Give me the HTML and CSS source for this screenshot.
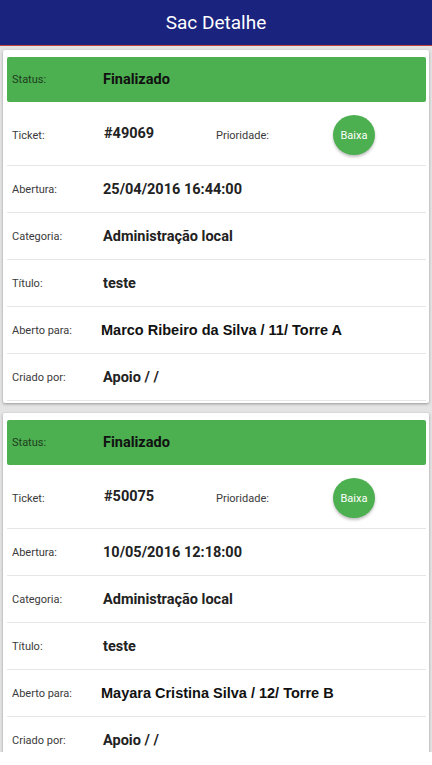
FILE: index.html
```html
<!DOCTYPE html>
<html lang="pt-BR">
<head>
<meta charset="UTF-8">
<meta name="viewport" content="width=device-width, initial-scale=1.0">
<title>Sac Detalhe</title>
<link rel="stylesheet" href="styles.css">
</head>
<body>
<div class="topbar">Sac Detalhe</div>

<div class="content">

<div class="card">
<div class="row status-row">
<span class="label">Status:</span>
<span class="value">Finalizado</span>
</div>
<div class="row ticket-row">
<span class="label">Ticket:</span>
<span class="value ticket">#49069</span>
<span class="label prio-label">Prioridade:</span>
<span class="badge">Baixa</span>
</div>
<div class="row">
<span class="label">Abertura:</span>
<span class="value">25/04/2016 16:44:00</span>
</div>
<div class="row">
<span class="label">Categoria:</span>
<span class="value">Administração local</span>
</div>
<div class="row">
<span class="label">Título:</span>
<span class="value">teste</span>
</div>
<div class="row">
<span class="label">Aberto para:</span>
<span class="value name">Marco Ribeiro da Silva / 11/ Torre A</span>
</div>
<div class="row">
<span class="label">Criado por:</span>
<span class="value">Apoio / /</span>
</div>
</div>

<div class="card">
<div class="row status-row">
<span class="label">Status:</span>
<span class="value">Finalizado</span>
</div>
<div class="row ticket-row">
<span class="label">Ticket:</span>
<span class="value ticket">#50075</span>
<span class="label prio-label">Prioridade:</span>
<span class="badge">Baixa</span>
</div>
<div class="row">
<span class="label">Abertura:</span>
<span class="value">10/05/2016 12:18:00</span>
</div>
<div class="row">
<span class="label">Categoria:</span>
<span class="value">Administração local</span>
</div>
<div class="row">
<span class="label">Título:</span>
<span class="value">teste</span>
</div>
<div class="row">
<span class="label">Aberto para:</span>
<span class="value name">Mayara Cristina Silva / 12/ Torre B</span>
</div>
<div class="row">
<span class="label">Criado por:</span>
<span class="value">Apoio / /</span>
</div>
</div>

</div>
</body>
</html>
```

FILE: styles.css
```css
body {
  margin: 0;
  padding: 0;
  background-color: #fff;
  font-family: Roboto, 'Liberation Sans', sans-serif;
  color: #222;
}

.topbar {
  height: 45px;
  background-color: #1a237e;
  border-bottom: 1px solid #c0463a;
  color: #fff;
  font-size: 19px;
  display: flex;
  align-items: center;
  justify-content: center;
}

.content {
  height: 702px;
  overflow: hidden;
  background-color: #e4e4e4;
  padding: 4px 3px 0 3px;
}

.card {
  background-color: #fff;
  box-shadow: 0 1px 3px rgba(0, 0, 0, 0.35);
  border-radius: 2px;
  padding: 7px 3px 2px 4px;
  margin-bottom: 10px;
}

.row {
  display: flex;
  align-items: center;
  height: 46px;
  border-bottom: 1px solid #e6e6e6;
}

.label {
  width: 91px;
  padding-left: 5px;
  font-size: 11px;
  color: #3a3a3a;
  flex-shrink: 0;
}

.value {
  font-size: 14.5px;
  font-weight: bold;
  color: #222;
}

.status-row {
  height: 45px;
  background-color: #4caf50;
  border-radius: 2px;
  border-bottom: none;
  margin-bottom: 1px;
}

.status-row .label {
  color: #1e3d1e;
}

.status-row .value {
  color: #111;
}

.ticket-row {
  height: 62px;
  align-items: flex-start;
}

.ticket-row .label {
  margin-top: 26px;
}

.ticket-row .ticket {
  margin-top: 22px;
  padding-left: 1px;
  width: 112px;
}

.ticket-row .prio-label {
  width: 117px;
  padding-left: 0;
}

.badge {
  margin-top: 12px;
  width: 42px;
  height: 40px;
  border-radius: 50%;
  background-color: #4caf50;
  color: #fff;
  font-size: 11px;
  display: flex;
  align-items: center;
  justify-content: center;
  box-shadow: 0 2px 3px rgba(0, 0, 0, 0.25);
}

.name {
  font-family: 'Liberation Sans', Arial, sans-serif;
  font-size: 14.5px;
  color: #111;
  margin-left: -2px;
}
```
